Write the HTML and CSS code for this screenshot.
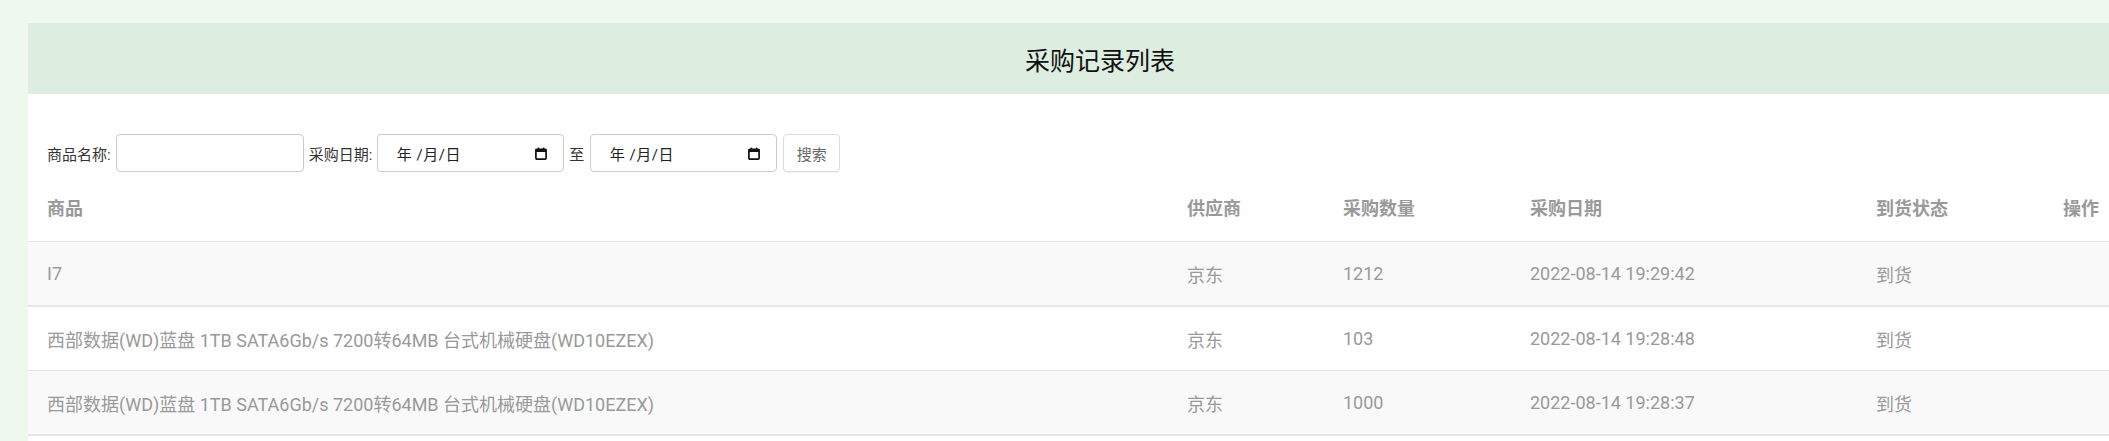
FILE: index.html
```html
<!DOCTYPE html>
<html lang="zh-CN">
<head>
  <meta charset="UTF-8" />
  <meta name="viewport" content="width=device-width, initial-scale=1.0" />
  <title>采购记录列表</title>
  <link rel="stylesheet" href="styles.css">
</head>
<body>
  <div class="container">
    <div class="title-bar">
      <h2>采购记录列表</h2>
    </div>

    <form class="search" onsubmit="return false">
      <label for="goodsName">商品名称:</label>
      <input type="text" id="goodsName" class="field">
      <label>采购日期:</label>
      <div class="date-field">
        <span>年 /月/日</span>
        <svg class="cal" width="12" height="13" viewBox="0 0 12 13">
          <rect x="0.9" y="2.4" width="10.2" height="9.7" rx="1" fill="none" stroke="#111" stroke-width="1.7"/>
          <rect x="0.5" y="2" width="11" height="3" fill="#111"/>
          <rect x="2.6" y="0.6" width="1.6" height="2" fill="#111"/>
          <rect x="7.8" y="0.6" width="1.6" height="2" fill="#111"/>
        </svg>
      </div>
      <span class="to">至</span>
      <div class="date-field">
        <span>年 /月/日</span>
        <svg class="cal" width="12" height="13" viewBox="0 0 12 13">
          <rect x="0.9" y="2.4" width="10.2" height="9.7" rx="1" fill="none" stroke="#111" stroke-width="1.7"/>
          <rect x="0.5" y="2" width="11" height="3" fill="#111"/>
          <rect x="2.6" y="0.6" width="1.6" height="2" fill="#111"/>
          <rect x="7.8" y="0.6" width="1.6" height="2" fill="#111"/>
        </svg>
      </div>
      <button type="submit" class="btn">搜索</button>
    </form>

    <table class="records">
      <colgroup>
        <col class="c-goods">
        <col class="c-supplier">
        <col class="c-num">
        <col class="c-date">
        <col class="c-status">
        <col class="c-op">
      </colgroup>
      <thead>
        <tr>
          <th>商品</th>
          <th>供应商</th>
          <th>采购数量</th>
          <th>采购日期</th>
          <th>到货状态</th>
          <th>操作</th>
        </tr>
      </thead>
      <tbody>
        <tr>
          <td>I7</td>
          <td>京东</td>
          <td>1212</td>
          <td>2022-08-14 19:29:42</td>
          <td>到货</td>
          <td></td>
        </tr>
        <tr>
          <td>西部数据(WD)蓝盘 1TB SATA6Gb/s 7200转64MB 台式机械硬盘(WD10EZEX)</td>
          <td>京东</td>
          <td>103</td>
          <td>2022-08-14 19:28:48</td>
          <td>到货</td>
          <td></td>
        </tr>
        <tr>
          <td>西部数据(WD)蓝盘 1TB SATA6Gb/s 7200转64MB 台式机械硬盘(WD10EZEX)</td>
          <td>京东</td>
          <td>1000</td>
          <td>2022-08-14 19:28:37</td>
          <td>到货</td>
          <td></td>
        </tr>
      </tbody>
    </table>
  </div>
</body>
</html>
```

FILE: styles.css
```css
html {
  overflow: hidden;
}
body {
  margin: 0;
  padding-top: 23px;
  background: #eef8ef;
  font-family: Roboto, "Noto Sans CJK SC", sans-serif;
  color: #333;
}
.container {
  width: 2144px;
  margin-left: 28px;
  background: #fff;
  min-height: 420px;
}
.title-bar {
  height: 71px;
  background: #ddede0;
  display: flex;
  align-items: center;
  justify-content: center;
}
.title-bar h2 {
  margin: 0;
  font-size: 25px;
  font-weight: normal;
  color: #111;
}
.search {
  display: flex;
  align-items: center;
  gap: 4.5px;
  padding: 40px 0 0 19px;
  font-size: 15px;
}
.search label {
  color: #333;
}
.field {
  box-sizing: border-box;
  width: 188px;
  height: 38px;
  margin-left: 1px;
  border: 1px solid #ccc;
  border-radius: 4px;
  font: inherit;
  padding: 0 10px;
}
.date-field {
  box-sizing: border-box;
  width: 187px;
  height: 38px;
  border: 1px solid #ccc;
  border-radius: 4px;
  display: flex;
  align-items: center;
  justify-content: space-between;
  padding: 0 16px 0 19px;
  color: #222;
  letter-spacing: 0.5px;
}
.cal {
  display: block;
}
.to {
  margin: 0 1px;
}
.btn {
  box-sizing: border-box;
  width: 57px;
  height: 38px;
  margin-left: 2px;
  background: #fff;
  border: 1px solid #ddd;
  border-radius: 4px;
  box-shadow: 0 1px 1px rgba(0, 0, 0, 0.05);
  font: inherit;
  color: #666;
}
.records {
  width: 100%;
  table-layout: fixed;
  border-collapse: collapse;
  font-size: 18px;
  color: #999;
}
.c-goods { width: 1140px; }
.c-supplier { width: 156px; }
.c-num { width: 187px; }
.c-date { width: 346px; }
.c-status { width: 187px; }
.c-op { width: 128px; }
.records th,
.records td {
  text-align: left;
  padding: 0 0 0 19px;
  white-space: nowrap;
}
.records th {
  height: 69px;
  font-weight: bold;
  color: #999;
  border-bottom: 1px solid #e6e6e6;
}
.records td {
  height: 63px;
}
.records tbody tr:nth-child(odd) {
  background: #f9f9f9;
  border-bottom: 2px solid #e6e6e6;
}
.records tbody tr:nth-child(even) {
  border-bottom: 1px solid #e6e6e6;
}
```
